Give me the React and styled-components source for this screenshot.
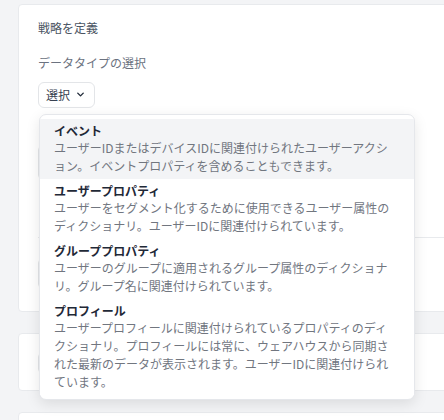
import React from "react";
import styled, { createGlobalStyle } from "styled-components";
import { ChevronDown } from "lucide-react";

const GlobalStyle = createGlobalStyle`
  html, body {
    margin: 0;
    height: 100%;
    overflow: hidden;
    background: #f3f4f6;
  }
  body {
    font-family: "Noto Sans CJK JP", "Noto Sans", sans-serif;
    -webkit-font-smoothing: antialiased;
  }
`;

const Page = styled.div`
  display: flex;
  flex-direction: column;
  gap: 21px;
  padding: 4px 0 0 18px;
`;

const Card = styled.section`
  width: calc(100% + 40px);
  box-sizing: border-box;
  background: #ffffff;
  border: 1px solid #e8eaed;
  border-radius: 4px;
  padding: ${props => props.$pad || "14px 0 23px 19px"};
  min-height: ${props => props.$minHeight || "auto"};
`;

const Heading = styled.h2`
  margin: 0;
  font-size: 12px;
  line-height: 18px;
  font-weight: 400;
  color: #4b5563;
`;

const Label = styled.div`
  margin-top: 17px;
  font-size: 12px;
  line-height: 18px;
  color: #6b7280;
`;

const SelectWrap = styled.div`
  position: relative;
  margin-top: 9px;
  align-self: flex-start;
`;

const SelectButton = styled.button`
  display: inline-flex;
  align-items: center;
  gap: 5px;
  height: 26px;
  padding: 0 8px 0 7px;
  border: 1px solid #e3e5e8;
  border-radius: 6px;
  background: #ffffff;
  font-family: inherit;
  font-size: 12px;
  color: #374151;
  cursor: pointer;
`;

const Menu = styled.ul`
  position: absolute;
  top: calc(100% + 6px);
  left: 1px;
  z-index: 10;
  width: 376px;
  box-sizing: border-box;
  margin: 0;
  padding: 4px 0;
  list-style: none;
  background: #ffffff;
  border: 1px solid #e5e7eb;
  border-radius: 7px;
  box-shadow: 0 4px 14px rgba(0, 0, 0, 0.1);
`;

const Option = styled.li`
  padding: 4px 12px 4px 14px;
  background: ${props => (props.$active ? "#f3f4f6" : "#ffffff")};
  cursor: pointer;
`;

const OptionTitle = styled.div`
  font-size: 12px;
  line-height: 16px;
  font-weight: 700;
  color: #1f2937;
`;

const OptionDesc = styled.div`
  font-size: 12px;
  line-height: 18px;
  color: #71767f;
  white-space: pre-line;
`;

const Field = styled.div`
  width: 260px;
  margin-top: ${props => props.$top || "0"};
  height: ${props => props.$height || "32px"};
  border: 1px solid #e3e5e8;
  border-radius: 4px;
`;

const Section = styled.div`
  margin-top: 58px;
  padding-top: 21px;
  border-top: 1px solid #e8eaed;
`;

const options = [
  {
    title: "イベント",
    desc: "ユーザーIDまたはデバイスIDに関連付けられたユーザーアクシ\nョン。イベントプロパティを含めることもできます。"
  },
  {
    title: "ユーザープロパティ",
    desc: "ユーザーをセグメント化するために使用できるユーザー属性の\nディクショナリ。ユーザーIDに関連付けられています。"
  },
  {
    title: "グループプロパティ",
    desc: "ユーザーのグループに適用されるグループ属性のディクショナ\nリ。グループ名に関連付けられています。"
  },
  {
    title: "プロフィール",
    desc: "ユーザープロフィールに関連付けられているプロパティのディ\nクショナリ。プロフィールには常に、ウェアハウスから同期さ\nれた最新のデータが表示されます。ユーザーIDに関連付けられ\nています。"
  }
];

const App = () => (
  <>
    <GlobalStyle />
    <Page>
      <Card>
        <Heading>戦略を定義</Heading>
        <Label>データタイプの選択</Label>
        <SelectWrap>
          <SelectButton>
            選択
            <ChevronDown size={11} strokeWidth={3} color="#1f2937" />
          </SelectButton>
          <Menu>
            {options.map((option, i) => (
              <Option key={option.title} $active={i === 0}>
                <OptionTitle>{option.title}</OptionTitle>
                <OptionDesc>{option.desc}</OptionDesc>
              </Option>
            ))}
          </Menu>
        </SelectWrap>
        <Field $top="38px" $height="31px" />
        <Section>
          <Field $height="27px" />
        </Section>
      </Card>
      <Card $pad="19px 0 17px 19px">
        <Field $height="18px" />
      </Card>
      <Card $minHeight="60px" />
    </Page>
  </>
);

export default App;
